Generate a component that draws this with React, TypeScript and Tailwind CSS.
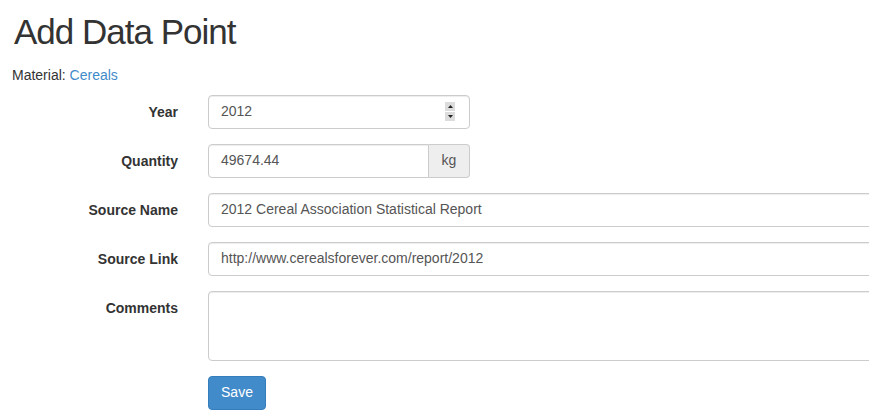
import React from "react";

const inputCls =
  "h-[34px] border border-[#ccc] rounded-[4px] bg-white shadow-[inset_0_1px_1px_rgba(0,0,0,0.075)] px-[12px] text-[14px] text-[#555] flex items-center";

function Row({ label, children, mb = true }: { label: string; children: React.ReactNode; mb?: boolean }) {
  return (
    <div className={`flex ${mb ? "mb-[15px]" : ""}`}>
      <div className="w-[166px] shrink-0 text-right pt-[7px] text-[14px] leading-[20px] font-bold text-[#333]">{label}</div>
      <div className="ml-[30px] shrink-0">{children}</div>
    </div>
  );
}

export default function App() {
  return (
    <div
      className="w-[869px] h-[420px] overflow-hidden bg-white pl-[12px] text-[#333]"
      style={{ fontFamily: '"Liberation Sans", Arial, sans-serif' }}
    >
      <h1 className="pt-[13px] text-[35px] leading-[1.1] font-normal tracking-[-1px] text-[#333] pl-[2px]">Add Data Point</h1>
      <p className="mt-[13px] mb-[10px] text-[14px] leading-[20px]">
        Material: <a className="text-[#428bca]">Cereals</a>
      </p>
      <div>
        <Row label="Year">
          <div className={`${inputCls} w-[262px] justify-between pr-[14px]`}>
            <span>2012</span>
            <div className="flex flex-col gap-[1px]">
              <div className="w-[10px] h-[9px] bg-[#dcdcdc] flex items-center justify-center">
                <svg width="5" height="3" viewBox="0 0 5 3"><path d="M2.5 0L5 3H0z" fill="#222" /></svg>
              </div>
              <div className="w-[10px] h-[9px] bg-[#dcdcdc] flex items-center justify-center">
                <svg width="5" height="3" viewBox="0 0 5 3"><path d="M0 0H5L2.5 3z" fill="#222" /></svg>
              </div>
            </div>
          </div>
        </Row>
        <Row label="Quantity">
          <div className="flex w-[262px]">
            <div className={`${inputCls} flex-1 rounded-r-none`}>49674.44</div>
            <div className="h-[34px] w-[41px] border border-l-0 border-[#ccc] rounded-r-[4px] bg-[#eee] text-[14px] text-[#555] flex items-center justify-center">
              kg
            </div>
          </div>
        </Row>
        <Row label="Source Name">
          <div className={`${inputCls} w-[720px]`}>2012 Cereal Association Statistical Report</div>
        </Row>
        <Row label="Source Link">
          <div className={`${inputCls} w-[720px]`}>http://www.cerealsforever.com/report/2012</div>
        </Row>
        <Row label="Comments">
          <div className="h-[70px] w-[720px] border border-[#ccc] rounded-[4px] bg-white shadow-[inset_0_1px_1px_rgba(0,0,0,0.075)]" />
        </Row>
        <div className="ml-[196px] mt-[1px]">
          <button className="h-[34px] w-[58px] bg-[#428bca] border border-[#357ebd] rounded-[4px] text-white text-[14px]">
            Save
          </button>
        </div>
      </div>
    </div>
  );
}
